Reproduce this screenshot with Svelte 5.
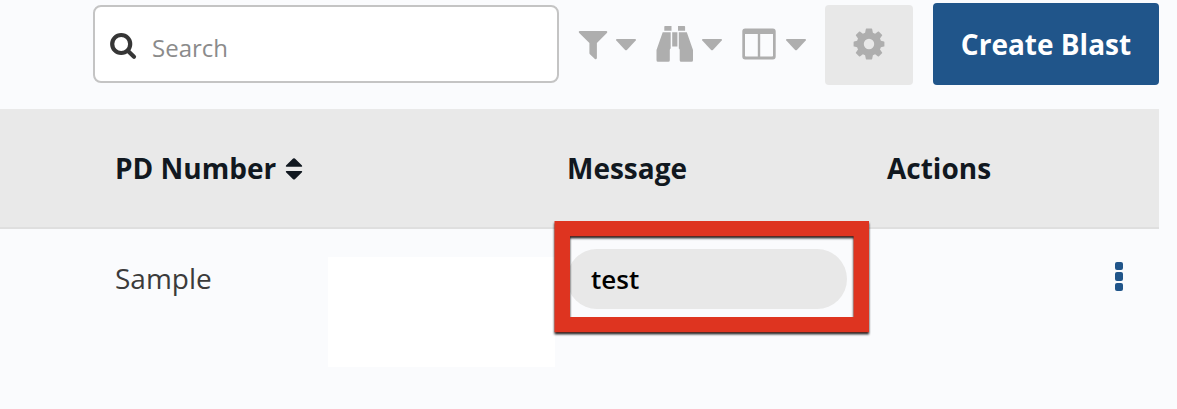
<!--
  Blast list: search toolbar, table header and a single blast row.
-->
<script lang="ts">
	interface Blast {
		id: number;
		pdNumber: string;
		message: string;
	}

	let search = $state('');

	const blasts: Blast[] = [{ id: 1, pdNumber: 'Sample', message: 'test' }];
</script>

{#snippet caret()}
	<svg class="caret" width="22" height="14" viewBox="0 0 22 14" aria-hidden="true">
		<path d="M1.8 1h18.4q1.4.3.5 1.6l-8.8 9.3q-.9.9-1.8 0L1.3 2.6Q.4 1.3 1.8 1z" />
	</svg>
{/snippet}

<div class="page">
	<div class="toolbar">
		<label class="search">
			<svg width="28" height="28" viewBox="0 0 28 28" aria-hidden="true">
				<circle cx="12.2" cy="12" r="9" />
				<path d="M18.8 18.8L25 24.7" />
			</svg>
			<input type="text" placeholder="Search" bind:value={search} />
		</label>

		<button class="tool filter" aria-label="Filter">
			<svg width="30" height="30" viewBox="0 0 30 30" aria-hidden="true">
				<path d="M1.5 1h27q1.3.6.6 1.8L18.9 13v15q-.4 1.7-2 1l-5-4.8q-.5-.5-.5-1.2V13L1 2.8Q.2 1.5 1.5 1z" />
			</svg>
			{@render caret()}
		</button>
		<button class="tool find" aria-label="Saved searches">
			<svg width="38" height="38" viewBox="0 0 38 38" aria-hidden="true">
				<path d="M9 1h6.5v4.8H8.3V1.7Q8.3 1 9 1zM22 1h6.3q.8 0 .8.8v4h-7.1zM16.2 7.2h5.2v14.4h-5.2zM6.7 7.2h8v16.4q-.9.2-.9 1.5v10.1q0 1.6-1.5 1.6H2Q.5 36.8.5 35.2V25zM22.8 7.2h8L37 25v10.2q0 1.6-1.5 1.6H25.2q-1.5 0-1.5-1.6V25.1q0-1.3-.9-1.5z" />
			</svg>
			{@render caret()}
		</button>
		<button class="tool columns" aria-label="Columns">
			<svg width="36" height="34" viewBox="0 0 36 34" aria-hidden="true">
				<path fill-rule="evenodd" d="M4.2 1.4h27.6q2.9 0 2.9 2.9v25.2q0 2.9-2.9 2.9H4.2q-2.9 0-2.9-2.9V4.3q0-2.9 2.9-2.9zM4 7v21.8q0 .8.8.8h12V7zM19.2 7v22.6h12q.8 0 .8-.8V7z" />
			</svg>
			{@render caret()}
		</button>

		<button class="settings" aria-label="Settings">
			<svg width="32" height="32" viewBox="-16 -16 32 32" aria-hidden="true">
				<path
					fill-rule="evenodd"
					d="M-2.6-15.4h5.2q.5 0 .6.6l.7 3.6 2.2.9 3-2.1q.5-.3.9.1l3 3q.4.4.1.9l-2.1 3 .9 2.2 3 .6q.5.1.5.6v4q0 .5-.5.6l-3 .6-.9 2.2 2.1 3q.3.5-.1.9l-3 3q-.4.4-.9.1l-3-2.1-2.2.9-.7 3.6q-.1.6-.6.6h-5.2q-.5 0-.6-.6l-.7-3.6-2.2-.9-3 2.1q-.5.3-.9-.1l-3-3q-.4-.4-.1-.9l2.1-3-.9-2.2-3-.6q-.5-.1-.5-.6v-4q0-.5.5-.6l3-.6.9-2.2-2.1-3q-.3-.5.1-.9l3-3q.4-.4.9-.1l3 2.1 2.2-.9.7-3.6q.1-.6.6-.6zM0-5.2A5.2 5.2 0 1 0 0 5.2 5.2 5.2 0 1 0 0-5.2z"
				/>
			</svg>
		</button>
		<button class="create">Create Blast</button>
	</div>

	<div class="table">
		<div class="row head">
			<div class="number">
				PD Number
				<svg width="18" height="24" viewBox="0 0 18 24" aria-hidden="true">
					<path d="M9 1.2q.5 0 .9.4l7.1 6.9q.6 1.2-.5 1.2h-15Q.4 9.7 1 8.5l7.1-6.9q.4-.4.9-.4zM1.5 14h15q1.1 0 .5 1.2l-7.1 7q-.9.7-1.8 0L1 15.2Q.4 14 1.5 14z" />
				</svg>
			</div>
			<div class="message">Message</div>
			<div class="actions">Actions</div>
		</div>

		{#each blasts as blast (blast.id)}
			<div class="row body">
				<div class="number">{blast.pdNumber}</div>
				<div class="blank"></div>
				<div class="message">
					<span class="pill">{blast.message}</span>
					<svg class="highlight" width="325" height="124" viewBox="0 0 325 124" aria-hidden="true">
						<path fill-rule="evenodd" d="M4.5 4h314.5v111.2H4.5zM20 19.3v80.7h283.6v-80.7z" />
					</svg>
				</div>
				<div class="actions">
					<button class="more" aria-label="More actions">
						<span></span>
						<span></span>
						<span></span>
					</button>
				</div>
			</div>
		{/each}
	</div>
</div>

<style>
	:global(body) {
		margin: 0;
		background: #fafbfd;
	}

	.page {
		box-sizing: border-box;
		width: 1177px;
		height: 409px;
		overflow: hidden;
		background: #fafbfd;
		font-family: 'Open Sans', sans-serif;
		color: #3b3b3b;
	}

	button {
		padding: 0;
		border: 0;
		background: none;
		font-family: inherit;
	}

	svg {
		display: block;
		flex-shrink: 0;
	}

	.toolbar {
		box-sizing: border-box;
		display: flex;
		align-items: flex-start;
		height: 109px;
		padding: 3px 18px 0 93px;
	}

	.search {
		box-sizing: border-box;
		display: flex;
		align-items: center;
		width: 466px;
		height: 78px;
		margin-top: 2px;
		padding-left: 14px;
		border: 2px solid #c4c4c4;
		border-radius: 8px;
		background: #fff;
	}

	.search svg {
		margin-top: 4px;
		fill: none;
		stroke: #363636;
		stroke-width: 4.2;
		stroke-linecap: round;
	}

	.search input {
		width: 380px;
		margin: 8px 0 0 15px;
		padding: 0;
		border: 0;
		outline: 0;
		background: none;
		font: 24px/34px 'Open Sans', sans-serif;
	}

	.search input::placeholder {
		color: #8b8b8b;
		opacity: 1;
	}

	.tool {
		display: flex;
		align-items: center;
		height: 78px;
		margin-top: 2px;
		fill: #aeaeae;
	}

	.tool .caret {
		margin-top: 2px;
	}

	.filter {
		height: 80px;
		margin-left: 18.5px;
		gap: 7px;
	}

	.filter .caret {
		margin-top: 0;
	}

	.find {
		margin-left: 19.5px;
		gap: 7px;
	}

	.columns {
		margin-left: 18px;
		gap: 7.5px;
	}

	.settings {
		display: flex;
		align-items: center;
		justify-content: center;
		width: 88px;
		height: 80px;
		margin: 2px 20px 0 auto;
		padding-bottom: 2px;
		border-radius: 4px;
		background: #e8e8e8;
		fill: #aeaeae;
	}

	.create {
		width: 226px;
		height: 82px;
		border-radius: 4px;
		background: #20558a;
		color: #fff;
		font-size: 28px;
		font-weight: 700;
		line-height: 38px;
	}

	.table {
		width: 1159px;
	}

	.row {
		display: grid;
		grid-template-columns: 213px 239px 320px 1fr;
		padding-left: 115px;
		line-height: 38px;
	}

	.head {
		align-items: center;
		height: 118px;
		border-bottom: 2px solid #dfdfdf;
		background: #e9e9e9;
		color: #111820;
		font-size: 28px;
		font-weight: 700;
	}

	.head .number {
		display: flex;
		grid-column: span 2;
		align-items: center;
		gap: 9px;
	}

	.head svg {
		margin-top: 2px;
		fill: #111820;
	}

	.body {
		align-items: start;
		font-size: 28px;
	}

	.body .number {
		padding-top: 30px;
	}

	.blank {
		width: 227px;
		height: 110px;
		margin-top: 28px;
		background: #fff;
	}

	.body .message {
		position: relative;
		padding-top: 20px;
	}

	.pill {
		box-sizing: border-box;
		display: flex;
		align-items: center;
		width: 280px;
		height: 60px;
		padding-left: 24px;
		border-radius: 30px;
		background: #e8e8e8;
		color: #000;
		font-size: 26px;
		font-weight: 600;
	}

	.highlight {
		position: absolute;
		top: -12px;
		left: -17px;
		fill: #de3420;
		filter: drop-shadow(0 2px 0.8px rgb(0 0 0 / 90%));
	}

	.body .actions {
		display: flex;
		justify-content: flex-end;
		padding: 32.5px 36px 0 0;
	}

	.more {
		display: flex;
		flex-direction: column;
		gap: 2px;
	}

	.more span {
		width: 8px;
		height: 8.6px;
		border-radius: 2px;
		background: #20558a;
	}
</style>
